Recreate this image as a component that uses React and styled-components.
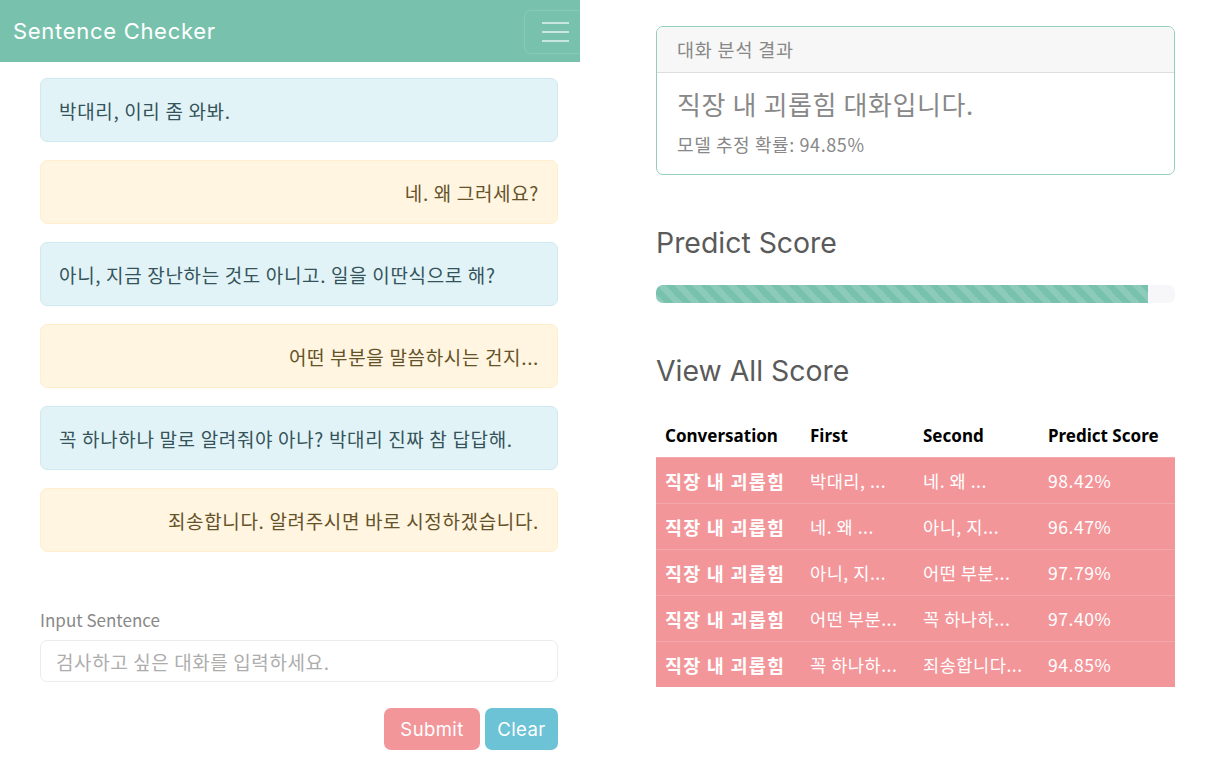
import styled, { createGlobalStyle } from "styled-components";

const GlobalStyle = createGlobalStyle`
  body {
    margin: 0;
    background: #fff;
    font-family: "Noto Sans CJK KR", "Noto Sans", sans-serif;
    font-size: 17.6px;
    color: #5a5a5a;
  }
`;

const messages = [
  { text: "박대리, 이리 좀 와봐.", side: "left" },
  { text: "네. 왜 그러세요?", side: "right" },
  { text: "아니, 지금 장난하는 것도 아니고. 일을 이딴식으로 해?", side: "left" },
  { text: "어떤 부분을 말씀하시는 건지...", side: "right" },
  { text: "꼭 하나하나 말로 알려줘야 아나? 박대리 진짜 참 답답해.", side: "left" },
  { text: "죄송합니다. 알려주시면 바로 시정하겠습니다.", side: "right" },
];

const rows = [
  ["박대리, ...", "네. 왜 ...", "98.42%"],
  ["네. 왜 ...", "아니, 지...", "96.47%"],
  ["아니, 지...", "어떤 부분...", "97.79%"],
  ["어떤 부분...", "꼭 하나하...", "97.40%"],
  ["꼭 하나하...", "죄송합니다...", "94.85%"],
];

const App = () => {
  return (
    <Page>
      <GlobalStyle />
      <LeftCol>
        <Navbar>
          <Brand>Sentence Checker</Brand>
          <Toggler aria-label="menu">
            <Bar />
            <Bar />
            <Bar />
          </Toggler>
        </Navbar>
        <Chat>
          {messages.map((m, i) => (
            <Alert key={i} side={m.side}>{m.text}</Alert>
          ))}
          <Form>
            <Label htmlFor="sentence">Input Sentence</Label>
            <Input id="sentence" placeholder="검사하고 싶은 대화를 입력하세요." />
            <Buttons>
              <Button color="#f3969a" width={96}>Submit</Button>
              <Button color="#6cc3d5" width={73}>Clear</Button>
            </Buttons>
          </Form>
        </Chat>
      </LeftCol>

      <RightCol>
        <Card>
          <CardHeader>대화 분석 결과</CardHeader>
          <CardBody>
            <CardTitle>직장 내 괴롭힘 대화입니다.</CardTitle>
            <CardText>모델 추정 확률: 94.85%</CardText>
          </CardBody>
        </Card>

        <Heading>Predict Score</Heading>
        <Progress>
          <ProgressFill style={{ width: "94.85%" }} />
        </Progress>

        <Heading>View All Score</Heading>
        <Table>
          <colgroup>
            <col style={{ width: 145 }} />
            <col style={{ width: 113 }} />
            <col style={{ width: 125 }} />
            <col />
          </colgroup>
          <thead>
            <tr>
              <Th>Conversation</Th>
              <Th>First</Th>
              <Th>Second</Th>
              <Th>Predict Score</Th>
            </tr>
          </thead>
          <tbody>
            {rows.map((r, i) => (
              <Row key={i}>
                <Td bold>직장 내 괴롭힘</Td>
                <Td>{r[0]}</Td>
                <Td>{r[1]}</Td>
                <Td>{r[2]}</Td>
              </Row>
            ))}
          </tbody>
        </Table>
      </RightCol>
    </Page>
  );
};

const Page = styled.div`
  display: flex;
  align-items: flex-start;
  width: 1209px;
  min-height: 763px;
`;

const LeftCol = styled.div`
  width: 580px;
  flex-shrink: 0;
`;

const Navbar = styled.nav`
  height: 62px;
  background-color: #78c2ad;
  display: flex;
  align-items: center;
  justify-content: space-between;
  padding-left: 13px;
  overflow: hidden;
  box-sizing: border-box;
`;

const Brand = styled.div`
  font-family: Inter, "Noto Sans", sans-serif;
  font-size: 22px;
  color: #fff;
  letter-spacing: 0.7px;
`;

const Toggler = styled.button`
  width: 61px;
  height: 44px;
  margin-right: -5px;
  margin-top: 1px;
  background: transparent;
  border: 1px solid rgba(255, 255, 255, 0.12);
  border-radius: 7px;
  display: flex;
  flex-direction: column;
  justify-content: center;
  align-items: flex-start;
  gap: 7px;
  padding: 0 0 0 17px;
  flex-shrink: 0;
`;

const Bar = styled.span`
  display: block;
  width: 27px;
  height: 2px;
  background: rgba(255, 255, 255, 0.6);
`;

const Chat = styled.div`
  padding: 16px 22px 0 40px;
`;

const Alert = styled.div`
  height: 64px;
  box-sizing: border-box;
  padding: 0 18px;
  margin-bottom: 18px;
  border-radius: 7px;
  display: flex;
  align-items: center;
  justify-content: ${(p) => (p.side === "right" ? "flex-end" : "flex-start")};
  font-size: 19px;
  letter-spacing: 0.65px;
  background-color: ${(p) => (p.side === "right" ? "#fff5e1" : "#e2f3f7")};
  border: 1px solid ${(p) => (p.side === "right" ? "#ffefcf" : "#cfeaf1")};
  color: ${(p) => (p.side === "right" ? "#665229" : "#34535a")};
`;

const Form = styled.div`
  padding-top: 37px;
`;

const Label = styled.label`
  display: block;
  font-size: 17px;
  color: #888;
  line-height: 26px;
  margin-bottom: 7px;
`;

const Input = styled.input`
  display: block;
  width: 100%;
  height: 42px;
  box-sizing: border-box;
  border: 1px solid #ececec;
  border-radius: 7px;
  padding: 0 15px;
  font-family: "Noto Sans CJK KR", sans-serif;
  font-size: 19px;
  letter-spacing: 0.6px;
  color: #5a5a5a;
  outline: none;
  &::placeholder {
    color: #adadad;
  }
`;

const Buttons = styled.div`
  display: flex;
  justify-content: flex-end;
  gap: 5px;
  margin-top: 26px;
`;

const Button = styled.button`
  width: ${(p) => p.width}px;
  height: 42px;
  padding: 0;
  border: none;
  border-radius: 7px;
  background-color: ${(p) => p.color};
  color: #fff;
  font-family: Inter, "Noto Sans", sans-serif;
  font-size: 18.5px;
  letter-spacing: 0.4px;
`;

const RightCol = styled.div`
  width: 519px;
  margin-left: 76px;
  padding-top: 26px;
`;

const Card = styled.div`
  border: 1px solid #94cfbe;
  border-radius: 7px;
  overflow: hidden;
`;

const CardHeader = styled.div`
  background-color: #f7f7f7;
  border-bottom: 1px solid #dedede;
  padding: 0 20px;
  height: 45px;
  line-height: 44px;
  font-size: 18.5px;
  letter-spacing: 0.8px;
  color: #888;
`;

const CardBody = styled.div`
  padding: 16px 20px 18px;
`;

const CardTitle = styled.div`
  font-size: 26px;
  letter-spacing: 0.6px;
  line-height: 30px;
  color: #888;
  margin-bottom: 13px;
`;

const CardText = styled.div`
  font-size: 18px;
  letter-spacing: 0.6px;
  line-height: 24px;
  color: #888;
`;

const Heading = styled.h3`
  margin: 51px 0 25px;
  font-family: Inter, "Noto Sans", sans-serif;
  font-weight: 400;
  font-size: 28.4px;
  line-height: 34px;
  color: #5a5a5a;
`;

const Progress = styled.div`
  height: 18px;
  background-color: #f7f7f9;
  border-radius: 7px;
  overflow: hidden;
  display: flex;
`;

const ProgressFill = styled.div`
  height: 100%;
  background-color: #78c2ad;
  background-image: linear-gradient(
    45deg,
    rgba(255, 255, 255, 0.15) 25%,
    transparent 25%,
    transparent 50%,
    rgba(255, 255, 255, 0.15) 50%,
    rgba(255, 255, 255, 0.15) 75%,
    transparent 75%,
    transparent
  );
  background-size: 17.6px 17.6px;
`;

const Table = styled.table`
  width: 100%;
  border-collapse: collapse;
  table-layout: fixed;
  margin-top: 1px;
`;

const Th = styled.th`
  text-align: left;
  padding: 0 9px;
  height: 44px;
  font-family: "Noto Sans", "Noto Sans CJK KR", sans-serif;
  font-size: 17px;
  font-weight: 700;
  color: #000;
  white-space: nowrap;
`;

const Row = styled.tr`
  background-color: #f3969a;
  border-top: 1px solid #f5a8ab;
`;

const Td = styled.td`
  padding: 0 9px;
  height: 45px;
  color: #fff;
  font-size: ${(p) => (p.bold ? 18.5 : 17.6)}px;
  letter-spacing: ${(p) => (p.bold ? 1.2 : 0.5)}px;
  font-weight: ${(p) => (p.bold ? 700 : 400)};
  white-space: nowrap;
  overflow: hidden;
`;

export default App;
